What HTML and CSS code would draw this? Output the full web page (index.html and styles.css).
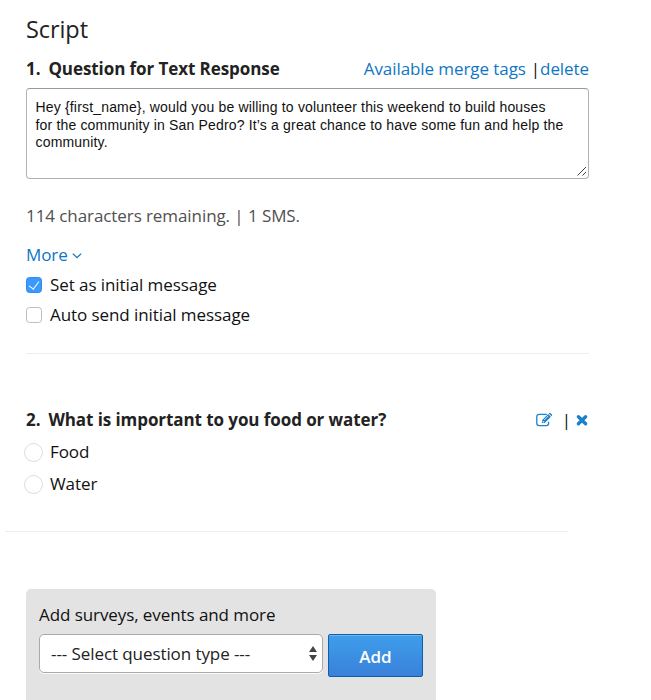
FILE: index.html
```html
<!DOCTYPE html>
<html lang="en">
<head>
  <meta charset="UTF-8">
  <title>Script</title>
  <link rel="stylesheet" href="styles.css">
</head>
<body>
  <div class="script">
    <h1>Script</h1>

    <div class="question-header">
      <h2 class="title-text"><span class="number">1.</span>Question for Text Response</h2>
      <div class="links"><a class="merge-tags" href="#">Available merge tags</a><span class="divider">|</span><a class="delete" href="#">delete</a></div>
    </div>
    <div class="message-box">
      <textarea class="message" spellcheck="false">Hey {first_name}, would you be willing to volunteer this weekend to build houses
for the community in San Pedro? It’s a great chance to have some fun and help the
community.</textarea>
      <svg class="grip" width="12" height="12" viewBox="0 0 12 12"><path d="M1.5 10.5L10 2M6.5 10.5L10 7"/></svg>
    </div>
    <p class="counter">114 characters remaining. | 1 SMS.</p>
    <a class="more" href="#"><span class="more-text">More</span><svg width="10" height="7" viewBox="0 0 10 7"><path d="M0.8 1.6L5 5.6L9.2 1.6"/></svg></a>
    <label class="option"><input type="checkbox" checked><span class="opt-initial">Set as initial message</span></label>
    <label class="option"><input type="checkbox"><span class="opt-auto">Auto send initial message</span></label>
    <hr>

    <div class="question-header second">
      <h2 class="title-choice"><span class="number">2.</span>What is important to you food or water?</h2>
      <div class="icons">
        <a href="#" aria-label="Edit">
          <svg class="edit" width="17" height="14" viewBox="0 0 17 14">
            <path class="line" d="M10.8 1.4H3.2Q0.8 1.4 0.8 3.8V10.2Q0.8 12.6 3.2 12.6H10.2Q12.6 12.6 12.6 10.2V8.8"/>
            <path class="fill" d="M6 10V7.3L12.2 1.1L14.9 3.8L8.7 10ZM12.8 0.5L13.3 0Q13.9 -0.4 14.4 0.1L15.9 1.6Q16.4 2.2 16 2.7L15.5 3.2Z"/>
            <path class="gap" d="M8.2 7L12.4 2.8M7 7.8V9.1H8.3"/>
          </svg>
        </a>
        <span class="divider">|</span>
        <a href="#" aria-label="Delete">
          <svg class="remove" width="12" height="12" viewBox="0 0 12 12"><path d="M2.4 2.8L9.6 9.8M9.6 2.8L2.4 9.8"/></svg>
        </a>
      </div>
    </div>
    <label class="choice"><input type="radio" name="choice"><span class="opt-food">Food</span></label>
    <label class="choice"><input type="radio" name="choice"><span class="opt-water">Water</span></label>
    <hr class="outdent">

    <div class="add-panel">
      <p><span class="add-label">Add surveys, events and more</span></p>
      <div class="add-row">
        <div class="select">
          <span class="select-text">--- Select question type ---</span>
          <svg width="8" height="15" viewBox="0 0 8 15"><path d="M0 6L4 0L8 6ZM0 9L4 15L8 9Z"/></svg>
        </div>
        <button type="button">Add</button>
      </div>
    </div>
  </div>
</body>
</html>
```
FILE: styles.css
```css
* {
  box-sizing: border-box;
}
body {
  margin: 0;
  height: 700px;
  overflow: hidden;
  background: #fff;
  color: #111;
  font: 17px/24px "Open Sans", "Noto Sans", sans-serif;
  letter-spacing: -0.08px;
}
h1, h2, p {
  margin: 0;
}
a {
  color: #0f76c4;
  text-decoration: none;
}
.script {
  width: 563px;
  margin-left: 26px;
  padding-top: 12px;
}
h1 {
  font-size: 23.5px;
  font-weight: 400;
  line-height: 34px;
  color: #222;
}
h2 {
  font-size: 17px;
  font-weight: 700;
  color: #222;
}
.number {
  margin-right: 8px;
}
.question-header {
  display: flex;
  justify-content: space-between;
  margin-top: 11px;
  height: 24px;
}
.links {
  white-space: nowrap;
}
.links .divider {
  margin: 0 0 0 5px;
}
.message-box {
  position: relative;
  height: 91px;
  margin-top: 7px;
}
.message {
  display: block;
  width: 563px;
  height: 91px;
  padding: 10px 8.5px;
  border: 1px solid #b3b3b3;
  border-top-color: #999;
  border-radius: 4px;
  outline: none;
  resize: none;
  overflow: hidden;
  white-space: pre;
  color: #111;
  font: 14px/17.5px "Liberation Sans", Arial, sans-serif;
  letter-spacing: 0.17px;
}
.grip {
  position: absolute;
  right: 1px;
  bottom: 2px;
}
.grip path {
  fill: none;
  stroke: #444;
}
.counter {
  margin-top: 25px;
  color: #505050;
}
.more {
  display: flex;
  align-items: center;
  gap: 4px;
  margin-top: 15px;
}
.more path {
  fill: none;
  stroke: #0f76c4;
  stroke-width: 1.3;
}
.option {
  display: flex;
  align-items: center;
  gap: 8px;
  margin-top: 6px;
}
input {
  appearance: none;
  flex: none;
  margin: 0;
  background: #fff;
}
.option input {
  width: 16px;
  height: 16px;
  border: 1px solid #bdbdbd;
  border-radius: 3.5px;
}
.option input:checked {
  display: grid;
  place-items: center;
  border-color: #2b8cf5;
  background: #3b99fc;
}
.option input:checked::before {
  content: "";
  width: 5px;
  height: 9px;
  margin-top: -2px;
  border: solid #fff;
  border-width: 0 1.8px 1.8px 0;
  transform: rotate(36deg);
}
hr {
  height: 1px;
  margin: 26px 0 0;
  border: 0;
  background: #eee;
}
.second {
  margin-top: 54px;
}
.icons {
  display: flex;
  align-items: center;
  margin-right: 1px;
}
.icons a {
  display: flex;
}
.icons .divider {
  margin: 0 5px 0 9px;
}
.icons svg {
  overflow: visible;
}
.edit .line {
  fill: none;
  stroke: #1a82c8;
  stroke-width: 1.3;
}
.edit .fill {
  fill: #1a82c8;
}
.edit .gap {
  fill: none;
  stroke: #fff;
  stroke-width: 0.8;
}
.remove path {
  stroke: #1a82c8;
  stroke-width: 3.4;
  stroke-linecap: round;
}
.choice {
  display: flex;
  align-items: center;
  gap: 7px;
  height: 24px;
  margin: 8px 0 0 -2px;
}
.choice input {
  width: 19px;
  height: 19px;
  border: 1px solid #ddd;
  border-radius: 50%;
}
hr.outdent {
  margin: 35px 0 0 -21px;
  width: 563px;
}
.add-panel {
  width: 410px;
  height: 130px;
  margin-top: 57px;
  padding: 14px 13px;
  border-radius: 5px;
  background: #e3e3e3;
}
.add-row {
  display: flex;
  align-items: flex-start;
  gap: 5px;
  margin-top: 7px;
}
.select {
  display: flex;
  align-items: center;
  justify-content: space-between;
  width: 284px;
  height: 39px;
  padding: 0 5px 0 11px;
  border: 1px solid #aaa;
  border-radius: 5px;
  background: #fff;
  box-shadow: 0 1px 0 #fafafa;
  color: #222;
}
.select path {
  fill: #444;
}
.add-row button {
  width: 95px;
  height: 43px;
  padding: 2px 0 0;
  border: 1px solid #0f5fa8;
  border-radius: 2px;
  background: linear-gradient(#3e9eea, #3a80db);
  box-shadow: inset 0 1px 0 #6db6f0;
  color: #fff;
  font: 600 17px/24px "Open Sans", sans-serif;
}
```
